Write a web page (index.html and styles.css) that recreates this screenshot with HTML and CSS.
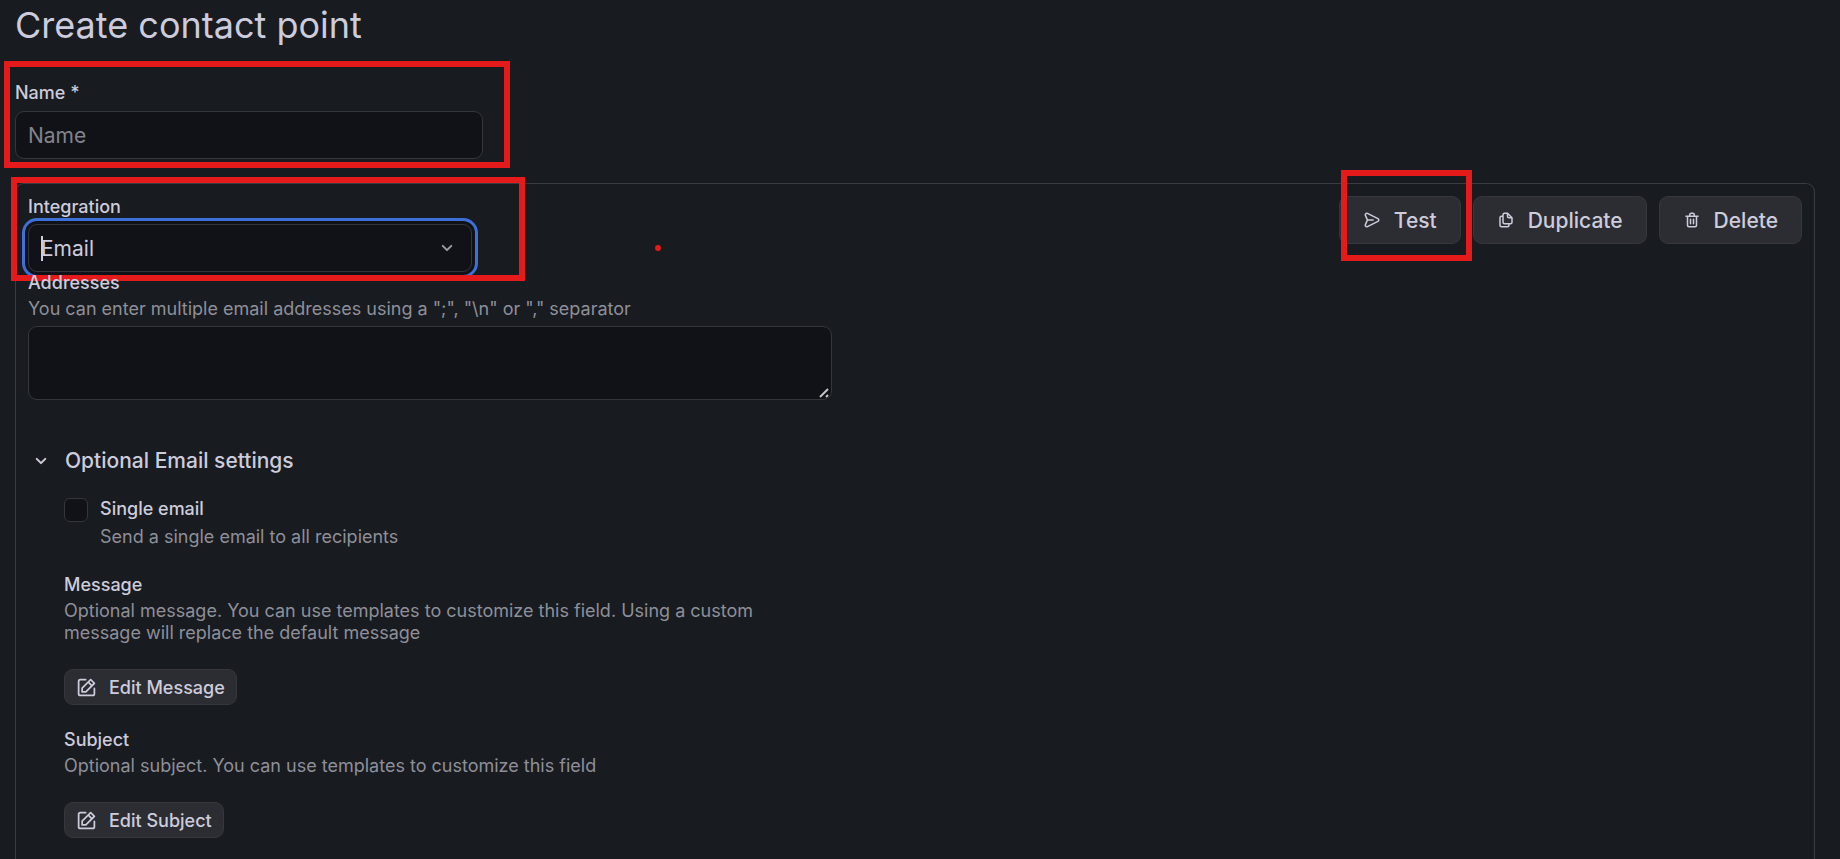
FILE: index.html
```html
<!DOCTYPE html>
<html lang="en">
<head>
    <meta charset="UTF-8">
    <meta name="viewport" content="width=device-width, initial-scale=1.0">
    <title>Create contact point</title>
    <link rel="stylesheet" href="styles.css">
</head>
<body>
    <h1>Create contact point</h1>

    <form class="contact-form">
        <div class="field name-field">
            <label for="name">Name *</label>
            <input type="text" id="name" placeholder="Name">
            <span class="mark mark-name"></span>
        </div>

        <section class="card">
            <div class="card-header">
                <div class="field integration-field">
                    <label for="integration">Integration</label>
                    <div class="select-wrap">
                        <select id="integration">
                            <option>Email</option>
                        </select>
                        <span class="caret"></span>
                        <svg class="select-arrow" viewBox="0 0 24 24"><path d="M17,9.17a1,1,0,0,0-1.41,0L12,12.71,8.46,9.17a1,1,0,0,0-1.41,0,1,1,0,0,0,0,1.42l4.24,4.24a1,1,0,0,0,1.42,0L17,10.59A1,1,0,0,0,17,9.17Z"/></svg>
                    </div>
                    <span class="mark mark-integration"></span>
                </div>
                <span class="dot"></span>
                <div class="actions">
                    <div class="test-wrap">
                        <button type="button" class="btn">
                            <svg viewBox="0 0 24 24"><path d="M20.34,9.32l-14-7a3,3,0,0,0-4.08,3.9l2.4,5.37h0a1.06,1.06,0,0,1,0,.82l-2.4,5.37A3,3,0,0,0,5,22a3.14,3.14,0,0,0,1.35-.32l14-7a3,3,0,0,0,0-5.36Zm-.89,3.57-14,7a1,1,0,0,1-1.35-1.3l2.39-5.37A2,2,0,0,0,6.57,13h6.89a1,1,0,0,0,0-2H6.57a2,2,0,0,0-.08-.22L4.1,5.41a1,1,0,0,1,1.35-1.3l14,7a1,1,0,0,1,0,1.78Z"/></svg>
                            Test
                        </button>
                        <span class="mark mark-test"></span>
                    </div>
                    <button type="button" class="btn">
                        <svg viewBox="0 0 24 24"><path d="M21,8.94a1.31,1.31,0,0,0-.06-.27l0-.09a1.07,1.07,0,0,0-.19-.28h0l-6-6h0a1.07,1.07,0,0,0-.28-.19.32.32,0,0,0-.09,0A.88.88,0,0,0,14.05,2H10A3,3,0,0,0,7,5V6H6A3,3,0,0,0,3,9V19a3,3,0,0,0,3,3h8a3,3,0,0,0,3-3V18h1a3,3,0,0,0,3-3V9S21,9,21,8.94ZM15,5.41,17.59,8H16a1,1,0,0,1-1-1ZM15,19a1,1,0,0,1-1,1H6a1,1,0,0,1-1-1V9A1,1,0,0,1,6,8H7v7a3,3,0,0,0,3,3h5Zm4-4a1,1,0,0,1-1,1H10a1,1,0,0,1-1-1V5a1,1,0,0,1,1-1h3V7a3,3,0,0,0,3,3h3Z"/></svg>
                        Duplicate
                    </button>
                    <button type="button" class="btn">
                        <svg viewBox="0 0 24 24"><path d="M10,18a1,1,0,0,0,1-1V11a1,1,0,0,0-2,0v6A1,1,0,0,0,10,18ZM20,6H16V5a3,3,0,0,0-3-3H11A3,3,0,0,0,8,5V6H4A1,1,0,0,0,4,8H5V19a3,3,0,0,0,3,3h8a3,3,0,0,0,3-3V8h1a1,1,0,0,0,0-2ZM10,5a1,1,0,0,1,1-1h2a1,1,0,0,1,1,1V6H10Zm7,14a1,1,0,0,1-1,1H8a1,1,0,0,1-1-1V8H17Zm-3-1a1,1,0,0,0,1-1V11a1,1,0,0,0-2,0v6A1,1,0,0,0,14,18Z"/></svg>
                        Delete
                    </button>
                </div>
            </div>

            <div class="field addresses-field">
                <label for="addresses">Addresses</label>
                <p class="description">You can enter multiple email addresses using a ";", "\n" or "," separator</p>
                <textarea id="addresses"></textarea>
            </div>

            <button type="button" class="section-toggle" aria-expanded="true">
                <svg viewBox="0 0 24 24"><path d="M17,9.17a1,1,0,0,0-1.41,0L12,12.71,8.46,9.17a1,1,0,0,0-1.41,0,1,1,0,0,0,0,1.42l4.24,4.24a1,1,0,0,0,1.42,0L17,10.59A1,1,0,0,0,17,9.17Z"/></svg>
                Optional Email settings
            </button>

            <div class="settings">
                <div class="check-field">
                    <input type="checkbox" id="single">
                    <div>
                        <label for="single">Single email</label>
                        <p class="description">Send a single email to all recipients</p>
                    </div>
                </div>

                <div class="template-field">
                    <h2>Message</h2>
                    <p class="description">Optional message. You can use templates to customize this field. Using a custom message will replace the default message</p>
                    <button type="button" class="btn btn-small">
                        <svg viewBox="0 0 24 24"><path d="M21,12a1,1,0,0,0-1,1v6a1,1,0,0,1-1,1H5a1,1,0,0,1-1-1V5A1,1,0,0,1,5,4h6a1,1,0,0,0,0-2H5A3,3,0,0,0,2,5V19a3,3,0,0,0,3,3H19a3,3,0,0,0,3-3V13A1,1,0,0,0,21,12ZM6,12.76V17a1,1,0,0,0,1,1h4.24a1,1,0,0,0,.71-.29l6.92-6.93h0L21.71,8a1,1,0,0,0,0-1.42L17.47,2.29a1,1,0,0,0-1.42,0L13.23,5.12h0L6.29,12.05A1,1,0,0,0,6,12.76ZM16.76,4.41l2.83,2.83L18.17,8.66,15.34,5.83ZM8,13.17l5.93-5.93,2.83,2.83L10.83,16H8Z"/></svg>
                        Edit Message
                    </button>
                </div>

                <div class="template-field">
                    <h2>Subject</h2>
                    <p class="description">Optional subject. You can use templates to customize this field</p>
                    <button type="button" class="btn btn-small">
                        <svg viewBox="0 0 24 24"><path d="M21,12a1,1,0,0,0-1,1v6a1,1,0,0,1-1,1H5a1,1,0,0,1-1-1V5A1,1,0,0,1,5,4h6a1,1,0,0,0,0-2H5A3,3,0,0,0,2,5V19a3,3,0,0,0,3,3H19a3,3,0,0,0,3-3V13A1,1,0,0,0,21,12ZM6,12.76V17a1,1,0,0,0,1,1h4.24a1,1,0,0,0,.71-.29l6.92-6.93h0L21.71,8a1,1,0,0,0,0-1.42L17.47,2.29a1,1,0,0,0-1.42,0L13.23,5.12h0L6.29,12.05A1,1,0,0,0,6,12.76ZM16.76,4.41l2.83,2.83L18.17,8.66,15.34,5.83ZM8,13.17l5.93-5.93,2.83,2.83L10.83,16H8Z"/></svg>
                        Edit Subject
                    </button>
                </div>
            </div>
        </section>
    </form>
</body>
</html>
```
FILE: styles.css
```css
* {
    box-sizing: border-box;
}
body {
    margin: 0;
    padding: 0 25px 0 15px;
    min-height: 100vh;
    display: flex;
    flex-direction: column;
    background-color: #181b1f;
    color: #ccccdc;
    font-family: Inter, sans-serif;
    font-size: 18px;
    line-height: 22px;
}
h1, h2, p {
    margin: 0;
}
h1 {
    padding-top: 3px;
    font-size: 36px;
    line-height: 44px;
    font-weight: 400;
}
svg {
    fill: currentColor;
    flex: none;
}
input, select, textarea, button {
    font-family: inherit;
    color: inherit;
}
.contact-form {
    flex: 1;
    display: flex;
    flex-direction: column;
    padding-top: 35px;
}
label, h2 {
    font-size: 18px;
    line-height: 22px;
    font-weight: 500;
}
.description {
    color: #8e8f99;
}
.field {
    position: relative;
    display: flex;
    flex-direction: column;
}
.name-field {
    width: 468px;
    gap: 7px;
    margin-bottom: 24px;
}
.name-field input, select {
    width: 100%;
    height: 48px;
    padding: 0 12px;
    font-size: 21px;
    background-color: #111217;
    border: 1px solid #35363c;
    border-radius: 9px;
    outline: none;
}
.name-field input::placeholder {
    color: #82838d;
}
.card {
    flex: 1;
    padding: 12px 12px 20px;
    border: 1px solid #3a3c42;
    border-bottom: none;
    border-radius: 9px 9px 0 0;
}
.card-header {
    position: relative;
    display: flex;
    justify-content: space-between;
    align-items: flex-start;
}
.integration-field {
    width: 444px;
    gap: 6px;
}
.select-wrap {
    position: relative;
    display: flex;
}
select {
    appearance: none;
    box-shadow: 0 0 0 3px #111217, 0 0 0 6px #3d71d9;
}
.select-arrow {
    position: absolute;
    top: 12px;
    right: 13px;
    width: 24px;
    height: 24px;
    color: #9a9ba6;
    pointer-events: none;
}
.caret {
    position: absolute;
    top: 12px;
    left: 13px;
    width: 2px;
    height: 25px;
    background-color: #ccccdc;
}
.actions {
    display: flex;
    gap: 12px;
}
.test-wrap {
    position: relative;
}
.btn {
    display: inline-flex;
    align-items: center;
    gap: 13px;
    height: 48px;
    padding: 0 23px;
    font-size: 21px;
    font-weight: 500;
    background-color: #2c2d32;
    border: 1px solid #36373d;
    border-radius: 9px;
    cursor: pointer;
}
.btn svg {
    width: 18px;
    height: 18px;
}
.btn-small {
    gap: 12px;
    height: 36px;
    padding: 0 11px;
    font-size: 18px;
}
.btn-small svg {
    width: 21px;
    height: 21px;
}
.addresses-field {
    width: 804px;
    max-width: 100%;
}
.addresses-field .description {
    padding: 4px 0 6px;
}
textarea {
    height: 74px;
    padding: 8px 12px;
    font-size: 21px;
    background-color: #111217;
    border: 1px solid #35363c;
    border-radius: 9px;
    outline: none;
    resize: vertical;
}
textarea::-webkit-resizer {
    background: url("data:image/svg+xml,%3Csvg xmlns='http://www.w3.org/2000/svg' viewBox='0 0 15 15'%3E%3Cpath d='M4 13L12 5M10 13L12 11' stroke='%23c4c4c4' stroke-width='2' fill='none'/%3E%3C/svg%3E") no-repeat;
}
.section-toggle {
    display: flex;
    align-items: center;
    gap: 12px;
    margin-top: 48px;
    padding: 0 1px;
    font-size: 21px;
    line-height: 26px;
    font-weight: 500;
    background: none;
    border: none;
    cursor: pointer;
}
.section-toggle svg {
    width: 24px;
    height: 24px;
}
.settings {
    width: 768px;
    max-width: 100%;
    padding: 24px 0 0 36px;
}
.check-field {
    display: flex;
    align-items: flex-start;
    gap: 12px;
    margin-bottom: 26px;
}
.check-field input {
    appearance: none;
    width: 24px;
    height: 24px;
    margin: 0;
    background-color: #111217;
    border: 1px solid #35363c;
    border-radius: 6px;
}
.check-field .description {
    padding-top: 6px;
}
.template-field {
    margin-bottom: 24px;
}
.template-field .description {
    padding: 4px 0 25px;
}

/* red highlights drawn over the form */
.mark {
    position: absolute;
    border: 6px solid #e51a1a;
    pointer-events: none;
}
.mark-name {
    inset: -21px -27px -9px -11px;
}
.mark-integration {
    inset: -19px -53px -9px -17px;
}
.mark-test {
    inset: -26px -11px -17px 2px;
}
.dot {
    position: absolute;
    top: 49px;
    left: 627px;
    width: 6px;
    height: 6px;
    border-radius: 50%;
    background-color: #e51a1a;
}
```
